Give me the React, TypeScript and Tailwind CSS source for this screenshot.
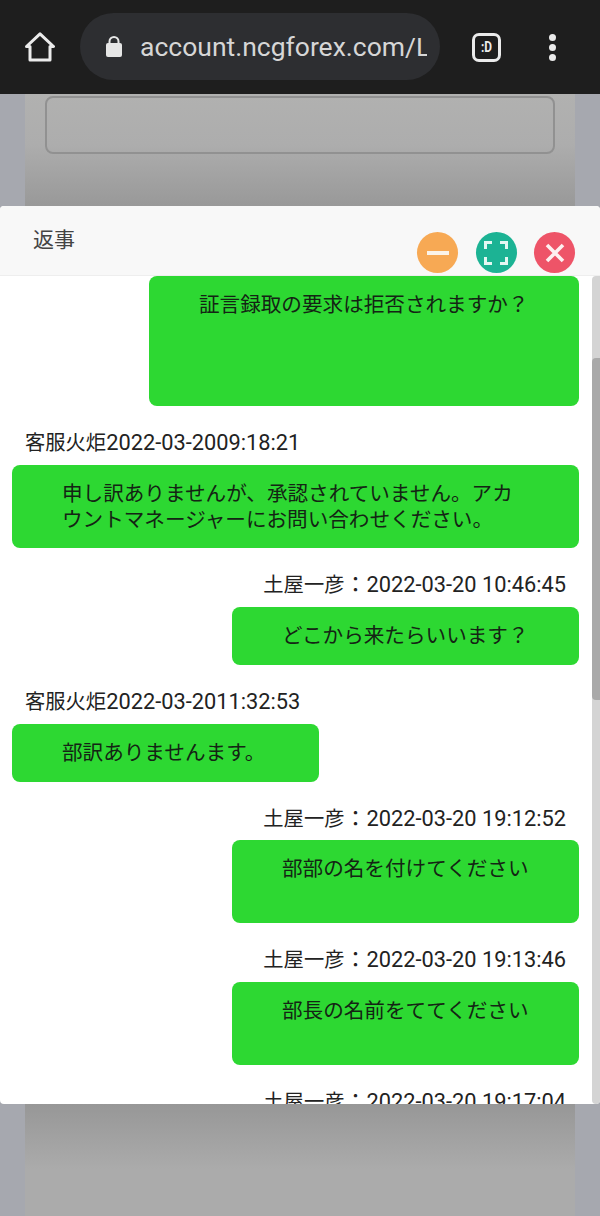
import React from "react";

const font = { fontFamily: '"Roboto","Noto Sans CJK JP",sans-serif' };

function Label({ side, children }: { side: "l" | "r"; children: React.ReactNode }) {
  return (
    <div className={`h-[26px] leading-[26px] text-[21.8px] text-[#222] whitespace-nowrap ${side === "l" ? "pl-[25px]" : "text-right pr-[34px]"}`}>
      {children}
    </div>
  );
}

function Name({ children }: { children: React.ReactNode }) {
  return <span className="text-[20.3px] leading-[0]">{children}</span>;
}

function Colon() {
  return <span className="text-[22px] leading-[0] [font-family:'Noto_Sans_CJK_TC',sans-serif]">：</span>;
}

function Bubble({ className, children }: { className: string; children: React.ReactNode }) {
  return (
    <div className={`bg-[#2dd832] rounded-[8px] pt-[16px] pl-[50px] pr-[50px] text-[20.6px] leading-[26px] text-[#142414] ${className}`}>
      {children}
    </div>
  );
}

export default function App() {
  return (
    <div className="relative w-[600px] h-[1216px] overflow-hidden flex flex-col bg-[#a6a8af]" style={font}>
      <header className="h-[94px] shrink-0 bg-[#1e1e1e] flex items-center pl-[25px]">
        <svg width="30" height="30" viewBox="0 0 30 30" fill="none" stroke="#ebebeb" strokeWidth="3" strokeLinejoin="round" strokeLinecap="round" className="shrink-0 mt-[-1px]">
          <path d="M1.5 14.5 15 1.8 28.5 14.5H25V28H5V14.5Z" />
        </svg>
        <div className="ml-[25px] w-[360px] h-[67px] mt-[-1px] rounded-full bg-[#2d2e31] flex items-center pl-[25px] pr-[13px]">
          <svg width="18" height="23" viewBox="0 0 18 23" className="shrink-0">
            <path d="M4.5 9V6.5a4.5 4.5 0 0 1 9 0V9" fill="none" stroke="#e6e6e6" strokeWidth="2" />
            <rect x="1" y="8" width="16" height="14" rx="2" fill="#e6e6e6" />
          </svg>
          <div className="ml-[17px] overflow-hidden whitespace-nowrap text-[26.5px] leading-[34px] text-[#d6d6d6]">account.ncgforex.com/Login</div>
        </div>
        <div className="ml-[32px] w-[29px] h-[29px] rounded-[7px] border-[3px] border-[#ebebeb] flex items-center justify-center text-[14px] font-bold text-[#ebebeb] leading-none shrink-0">
          <span className="inline-block scale-x-[0.85]">:D</span>
        </div>
        <div className="ml-[48px] flex flex-col gap-[3px] shrink-0">
          <span className="w-[7px] h-[7px] rounded-full bg-[#ebebeb]" />
          <span className="w-[7px] h-[7px] rounded-full bg-[#ebebeb]" />
          <span className="w-[7px] h-[7px] rounded-full bg-[#ebebeb]" />
        </div>
      </header>

      <main className="flex-1 mx-[25px] bg-[linear-gradient(to_bottom,#b1b1b0_0px,#adadad_50px,#999999_111px,#979797_1010px,#ababab_1075px,#ababab_1122px)] px-[20px] pt-[2px]">
        <div className="h-[58px] rounded-[8px] border-2 border-[#919191]" />
      </main>

      <section className="absolute left-0 top-[206px] w-[600px] h-[898px] bg-white rounded-[4px] overflow-hidden flex flex-col">
        <div className="relative h-[70px] shrink-0 bg-[#f8f8f8] border-b border-[#eeeeee]">
          <div className="absolute left-[33px] top-[20px] text-[21px] leading-[28px] text-[#444]">返事</div>
          <div className="absolute left-[417px] top-[26px] flex gap-[17.5px]">
            <div className="w-[41px] h-[41px] rounded-full bg-[#f7a954] flex items-center justify-center">
              <svg width="24" height="24" viewBox="0 0 24 24"><rect x="1" y="10" width="22" height="4" fill="#fbf3e8" /></svg>
            </div>
            <div className="w-[41px] h-[41px] rounded-full bg-[#1cb394] flex items-center justify-center">
              <svg width="26" height="26" viewBox="0 0 26 26" fill="none" stroke="#e4f7f2" strokeWidth="3">
                <path d="M9 2.5H2.5V9M17 2.5H23.5V9M9 23.5H2.5V17M17 23.5H23.5V17" />
              </svg>
            </div>
            <div className="w-[41px] h-[41px] rounded-full bg-[#ee5468] flex items-center justify-center">
              <svg width="22" height="22" viewBox="0 0 22 22" fill="none" stroke="#fdf0f0" strokeWidth="3.6">
                <path d="M3 3 19 19M19 3 3 19" />
              </svg>
            </div>
          </div>
        </div>
        <div className="relative flex-1 overflow-hidden">
          <div className="flex flex-col">
            <Bubble className="ml-[149px] w-[430px] h-[130px] whitespace-nowrap">証言録取の要求は拒否されますか？</Bubble>
            <div className="mt-[24px]"><Label side="l"><Name>客服火炬</Name>2022-03-2009:18:21</Label></div>
            <Bubble className="mt-[9px] ml-[12px] w-[567px] h-[83px]">申し訳ありませんが、承認されていません。アカウントマネージャーにお問い合わせください。</Bubble>
            <div className="mt-[24px]"><Label side="r"><Name>土屋一彦</Name><Colon />2022-03-20 10:46:45</Label></div>
            <Bubble className="mt-[9px] ml-[232px] w-[347px] h-[58px] whitespace-nowrap">どこから来たらいいます？</Bubble>
            <div className="mt-[24px]"><Label side="l"><Name>客服火炬</Name>2022-03-2011:32:53</Label></div>
            <Bubble className="mt-[9px] ml-[12px] w-[307px] h-[58px] whitespace-nowrap">部訳ありませんます。</Bubble>
            <div className="mt-[24px]"><Label side="r"><Name>土屋一彦</Name><Colon />2022-03-20 19:12:52</Label></div>
            <Bubble className="mt-[8px] ml-[232px] w-[347px] h-[83px] whitespace-nowrap">部部の名を付けてください</Bubble>
            <div className="mt-[24px]"><Label side="r"><Name>土屋一彦</Name><Colon />2022-03-20 19:13:46</Label></div>
            <Bubble className="mt-[9px] ml-[232px] w-[347px] h-[83px] whitespace-nowrap">部長の名前をててください</Bubble>
            <div className="mt-[24px]"><Label side="r"><Name>土屋一彦</Name><Colon />2022-03-20 19:17:04</Label></div>
          </div>
          <div className="absolute right-0 top-0 bottom-0 w-[8px] bg-[#d4d4d4] rounded-l-[4px]">
            <div className="mt-[82px] h-[342px] w-full bg-[#a9a9a9] rounded-l-[4px]" />
          </div>
        </div>
      </section>
    </div>
  );
}
